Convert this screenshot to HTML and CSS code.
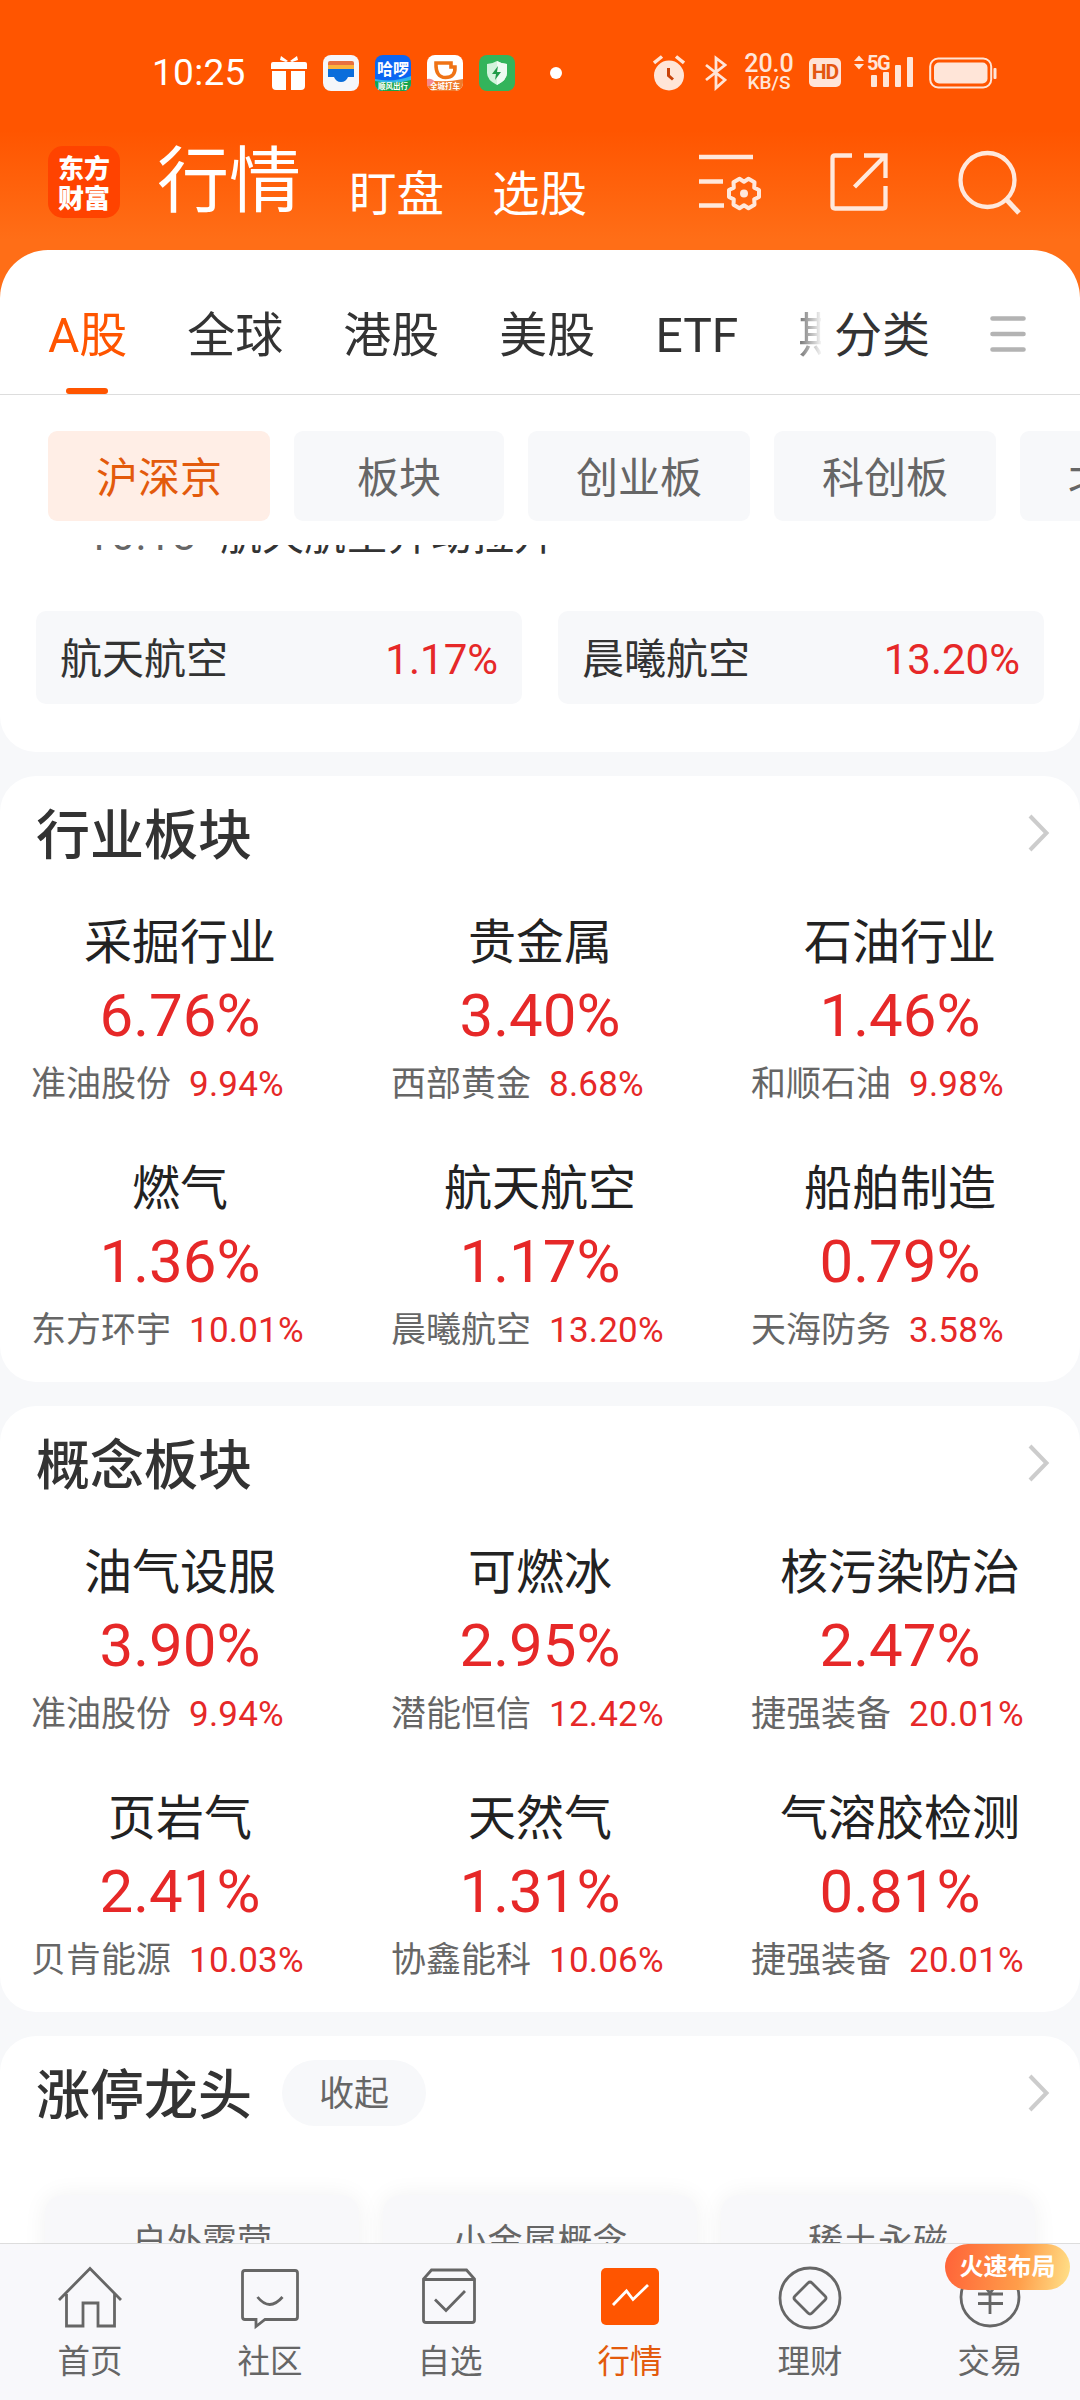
FILE: index.html
```html
<!DOCTYPE html>
<html lang="zh-CN">
<head>
<meta charset="utf-8">
<title>行情</title>
<link rel="stylesheet" href="styles.css">
</head>
<body>
<div class="app">
  <header class="header">
    <div class="status">
      <span class="clock">10:25</span>
      <div class="notices">
        <svg width="36" height="36" viewBox="0 0 36 36"><g fill="#fff"><path d="M17 6 10 1 9 5l6 2zM19 6l7-5 1 4-6 2z"/><path d="M2 7h32q2 0 2 2v5H0V9q0-2 2-2zM1 16h14v19H5q-4 0-4-4zM20 16h14v15q0 4-4 4H20z"/></g></svg>
        <svg width="36" height="36" viewBox="0 0 36 36"><rect width="36" height="36" rx="8" fill="#f5f6fa"/><path d="M5 8q0-2 2-2h22q2 0 2 2v2H5z" fill="#e8703e"/><path d="M5 10h26v5H5z" fill="#fbb33c"/><path d="M5 14h26v8h-6q-2 5-7 5t-7-5H5z" fill="#0a6ddb"/></svg>
        <svg width="36" height="36" viewBox="0 0 36 36"><clipPath id="hello"><rect width="36" height="36" rx="8"/></clipPath><g clip-path="url(#hello)"><rect width="36" height="36" fill="#0b66f2"/><path d="M0 24q18 4 36-3v15H0z" fill="#31b7e8"/><path d="M0 26q18 4 36-1v11H0z" fill="#17a34a"/></g><text x="18" y="20" class="app-name">哈啰</text><text x="18" y="34" class="app-note">顺风出行</text></svg>
        <svg width="36" height="36" viewBox="0 0 36 36"><clipPath id="ride"><rect width="36" height="36" rx="8"/></clipPath><g clip-path="url(#ride)"><rect width="36" height="36" fill="#fff"/><path d="M0 25q18 3 36-1v12H0z" fill="#ef7b2d"/><path d="M0 24q6-1 8 4l-8 4z" fill="#f58a8f"/></g><path d="M9 8h15v4h4q.5 10.500-9.500 10.500T9 8z" fill="none" stroke="#ef7315" stroke-width="3.600"/><text x="18" y="34" class="app-note">全城打车</text></svg>
        <svg width="36" height="36" viewBox="0 0 36 36"><rect width="36" height="36" rx="8" fill="#33b45b"/><path d="M18 6q5 3 10 3v9q0 7-10 12Q8 25 8 18V9q5 0 10-3z" fill="#d3f3dc"/><path d="M18 6q5 3 10 3v9q0 7-10 12z" fill="#effbf2"/><path d="m19 11-6 8h4l-1 6 6-8h-4z" fill="#1f9b48"/></svg>
      </div>
      <i class="dot"></i>
      <div class="signals">
        <svg width="32" height="36" viewBox="0 0 32 36"><circle cx="16" cy="20.500" r="15" fill="#ffe5d8"/><path d="m1 8 8-6.500M31 8l-8-6.500" stroke="#ffe5d8" stroke-width="3.500"/><path d="M15.500 13v7.500l4.500 4" fill="none" stroke="#c8420a" stroke-width="3"/></svg>
        <svg width="22" height="36" viewBox="0 0 22 36"><path d="m1 10 19 15-9 8V3l9 7L1 25" fill="none" stroke="#ffe5d8" stroke-width="2.800"/></svg>
        <span class="speed"><b>20.0</b><small>KB/S</small></span>
        <span class="hd">HD</span>
        <svg class="cell" width="60" height="36" viewBox="0 0 60 36"><g fill="#ffe5d8"><path d="m0 6 5-5.500L10 6zM0 9l5 5.500L10 9z"/><rect x="17" y="20" width="6" height="12" rx="1"/><rect x="29" y="17" width="6" height="15" rx="1"/><rect x="41" y="10" width="6" height="22" rx="1"/><rect x="53" y="2" width="6" height="30" rx="1"/></g><text x="13" y="14.500" class="cell-name">5G</text></svg>
        <svg width="68" height="32" viewBox="0 0 68 32"><rect x="1.200" y="1.500" width="61" height="29" rx="8" fill="none" stroke="#ffe5d8" stroke-width="2"/><rect x="5" y="5.500" width="53.500" height="21" rx="5" fill="#ffe5d8"/><rect x="64.500" y="11" width="3" height="11" rx="1" fill="#ffe5d8"/></svg>
      </div>
    </div>
    <div class="topbar">
      <div class="logo"><span>东方</span><span>财富</span></div>
      <nav class="modes"><h1>行情</h1><span>盯盘</span><span>选股</span></nav>
      <div class="tools">
        <svg width="64" height="60" viewBox="0 0 64 60"><g fill="none" stroke="#ffe8dc" stroke-width="4.500"><path d="M0 5h54M0 29.500h24M0 53.500h25"/><path transform="translate(45 41.500)" stroke-linejoin="round" stroke-width="4" d="M15-3.500V3.500L10.200 5.900 10.500 11.200 4.500 14.700 0 11.800-4.500 14.700-10.500 11.200-10.200 5.900-15 3.500V-3.500L-10.200-5.900-10.500-11.200-4.500-14.700 0-11.800 4.500-14.700 10.500-11.200 10.200-5.900z"/></g><circle cx="45" cy="41.500" r="4" fill="#ffe8dc"/></svg>
        <svg width="58" height="60" viewBox="0 0 58 60"><path d="M22 3.500H5q-2.500 0-2.500 2.500v48q0 2.500 2.500 2.500h48q2.500 0 2.500-2.500V34M34 3.500h21.500V26M24.500 35 54 5" fill="none" stroke="#ffe8dc" stroke-width="4.300"/></svg>
        <svg width="64" height="66" viewBox="0 0 64 66"><circle cx="29.500" cy="31" r="27" fill="none" stroke="#ffe8dc" stroke-width="4.300"/><path d="m48 50 13 14" stroke="#ffe8dc" stroke-width="5"/></svg>
      </div>
    </div>
  </header>

  <section class="sheet">
    <div class="tabs">
      <div class="tab-strip"><span class="active">A股</span><span>全球</span><span>港股</span><span>美股</span><span>ETF</span><span>期货</span></div>
      <span class="sort">分类</span>
      <svg width="36" height="38" viewBox="0 0 36 38"><path d="M2.500 3.500h31M2.500 19h31M2.500 34.500h31" stroke="#b3b3b3" stroke-width="4.600" stroke-linecap="round"/></svg>
    </div>
    <div class="chips"><span class="wide on">沪深京</span><span>板块</span><span class="wide">创业板</span><span class="wide">科创板</span><span class="wide">北交所</span></div>
  </section>

  <main class="feed">
    <section class="card news">
      <div class="headline"><time>10:18</time><span>航天航空异动拉升</span></div>
      <div class="related">
        <div><span>航天航空</span><em>1.17%</em></div>
        <div><span>晨曦航空</span><em>13.20%</em></div>
      </div>
    </section>

    <section class="card">
      <div class="card-head"><h2>行业板块</h2><svg class="more" width="22" height="38" viewBox="0 0 22 38"><path d="m2 2 16.500 17L2 36" fill="none" stroke="#ccc" stroke-width="4"/></svg></div>
      <div class="grid">
        <article><h3>采掘行业</h3><strong>6.76%</strong><p>准油股份<em>9.94%</em></p></article>
        <article><h3>贵金属</h3><strong>3.40%</strong><p>西部黄金<em>8.68%</em></p></article>
        <article><h3>石油行业</h3><strong>1.46%</strong><p>和顺石油<em>9.98%</em></p></article>
        <article><h3>燃气</h3><strong>1.36%</strong><p>东方环宇<em>10.01%</em></p></article>
        <article><h3>航天航空</h3><strong>1.17%</strong><p>晨曦航空<em>13.20%</em></p></article>
        <article><h3>船舶制造</h3><strong>0.79%</strong><p>天海防务<em>3.58%</em></p></article>
      </div>
    </section>

    <section class="card">
      <div class="card-head"><h2>概念板块</h2><svg class="more" width="22" height="38" viewBox="0 0 22 38"><path d="m2 2 16.500 17L2 36" fill="none" stroke="#ccc" stroke-width="4"/></svg></div>
      <div class="grid">
        <article><h3>油气设服</h3><strong>3.90%</strong><p>准油股份<em>9.94%</em></p></article>
        <article><h3>可燃冰</h3><strong>2.95%</strong><p>潜能恒信<em>12.42%</em></p></article>
        <article><h3>核污染防治</h3><strong>2.47%</strong><p>捷强装备<em>20.01%</em></p></article>
        <article><h3>页岩气</h3><strong>2.41%</strong><p>贝肯能源<em>10.03%</em></p></article>
        <article><h3>天然气</h3><strong>1.31%</strong><p>协鑫能科<em>10.06%</em></p></article>
        <article><h3>气溶胶检测</h3><strong>0.81%</strong><p>捷强装备<em>20.01%</em></p></article>
      </div>
    </section>

    <section class="card leaders">
      <div class="card-head"><h2>涨停龙头</h2><span class="fold">收起</span><svg class="more" width="22" height="38" viewBox="0 0 22 38"><path d="m2 2 16.500 17L2 36" fill="none" stroke="#ccc" stroke-width="4"/></svg></div>
      <div class="themes"><span>户外露营</span><span>小金属概念</span><span>稀土永磁</span></div>
    </section>
  </main>

  <nav class="bottom">
    <a><svg width="66" height="66" viewBox="0 0 66 66"><path d="m2 35 31-31.500L64 35M9.500 29v32H26V38h15v23h16.500V29" fill="none" stroke="#666" stroke-width="2.800"/></svg>首页</a>
    <a><svg width="66" height="66" viewBox="0 0 66 66"><path d="M8 5.500h50q2.500 0 2.500 2.500v44q0 2.500-2.500 2.500H28l-9 7v-7H8q-2.500 0-2.500-2.500V8q0-2.500 2.500-2.500zM20.500 32q12 15 25 0" fill="none" stroke="#666" stroke-width="2.800"/></svg>社区</a>
    <a><svg width="66" height="66" viewBox="0 0 66 66"><path d="M6.500 14v41q0 2.500 2.500 2.500h46q2.500 0 2.500-2.500V14l-8-9h-35zM6.500 14.500h51M18 34.500l11 11L48 26" fill="none" stroke="#666" stroke-width="2.800"/></svg>自选</a>
    <a class="current"><svg width="66" height="66" viewBox="0 0 66 66"><rect x="4" y="3" width="58" height="57" rx="5" fill="#f50"/><path d="m16 40 13.500-14 6.500 8.500L51 20" fill="none" stroke="#fff" stroke-width="2.800"/></svg>行情</a>
    <a><svg width="66" height="66" viewBox="0 0 66 66"><circle cx="33" cy="33" r="30" fill="none" stroke="#666" stroke-width="2.800"/><path d="M31 18q2-2 4 0l13 13q2 2 0 4L35 48q-2 2-4 0L18 35q-2-2 0-4z" fill="none" stroke="#666" stroke-width="2.800"/></svg>理财</a>
    <a><svg width="66" height="66" viewBox="0 0 66 66"><g fill="none" stroke="#666" stroke-width="2.800"><circle cx="33" cy="32" r="29"/><path d="m22 14 11 14 11-14M21 29h25M21 38.500h25M33 27v22"/></g></svg>交易<span class="promo">火速布局</span></a>
  </nav>
</div>
</body>
</html>
```
FILE: styles.css
```css
* { box-sizing: border-box; margin: 0; padding: 0; }
body { width: 1080px; height: 2400px; overflow: hidden; background: #f7f8fa; color: #333; font-family: Roboto, "Noto Sans CJK SC", sans-serif; }
svg { display: block; flex: none; }
h1, h2, h3, em { font-weight: 400; font-style: normal; }
.app { height: 2400px; display: flex; flex-direction: column; overflow: hidden; }

.header { height: 298px; margin-bottom: -48px; flex: none; background: linear-gradient(#f50 130px, #ff6e17 240px); color: #fff; }
.status { height: 128px; padding: 17px 83px 0 152px; display: flex; align-items: center; }
.clock { width: 119px; font-size: 37px; letter-spacing: .3px; }
.notices { display: flex; gap: 16px; }
.dot { width: 12px; height: 12px; margin-left: 35px; border-radius: 50%; background: #fff; }
.signals { margin-left: auto; display: flex; align-items: center; color: #ffe5d8; }
.signals > :nth-child(2) { margin-left: 20px; }
.speed { width: 52px; margin-left: 16px; display: flex; flex-direction: column; align-items: center; font-weight: 500; }
.speed b { font-size: 25px; line-height: 21px; font-weight: 500; }
.speed small { font-size: 19px; line-height: 18px; }
.hd { width: 32px; height: 29px; margin-left: 14px; border-radius: 5px; background: #ffe5d8; color: #e3560f; font-size: 21px; line-height: 29px; text-align: center; font-weight: 700; letter-spacing: -1px; }
.cell { margin-left: 13px; margin-right: 15px; }
.cell-name { font-size: 20px; font-weight: 700; fill: #ffe5d8; letter-spacing: -1.500px; }
.app-name { font-size: 16px; font-weight: 700; fill: #fff; text-anchor: middle; }
.app-note { font-size: 7.500px; font-weight: 700; fill: #fff; text-anchor: middle; }

.topbar { height: 108px; padding: 0 58px 0 48px; display: flex; align-items: center; }
.logo { width: 72px; height: 72px; border-radius: 15px; background: #ff4300; display: flex; flex-direction: column; align-items: center; justify-content: center; font: 900 26px/30px "Noto Sans CJK SC", sans-serif; }
.modes { margin-left: 37px; display: flex; align-items: center; line-height: 108px; }
.modes h1 { font-size: 72px; }
.modes span { margin-left: 48px; padding-top: 25px; font-size: 47.500px; }
.tools { margin-left: auto; display: flex; align-items: center; gap: 70px; }
.tools svg:first-child { margin-right: -3px; }

.sheet { height: 295px; flex: none; background: #fff; border-radius: 48px 48px 0 0; }
.tabs { height: 145px; padding: 0 54px 0 48px; border-bottom: 1px solid #ddd; display: flex; align-items: flex-start; color: #333; font-size: 48px; line-height: 172px; }
.tabs > svg { margin-left: auto; margin-top: 65px; }
.tab-strip { width: 773px; height: 144px; display: flex; gap: 60px; overflow: hidden; white-space: nowrap; -webkit-mask-image: linear-gradient(90deg, #000 740px, transparent 775px); mask-image: linear-gradient(90deg, #000 740px, transparent 775px); }
.tab-strip .active { height: 144px; color: #f50; position: relative; }
.tab-strip .active::after { content: ""; position: absolute; left: 18px; bottom: 0; width: 42px; height: 6px; border-radius: 3px; background: #f50; }
.sort { margin-left: 13px; height: 144px; }
.chips { padding: 36px 0 0 48px; display: flex; gap: 24px; overflow: hidden; }
.chips span { width: 210px; height: 90px; flex: none; border-radius: 9px; background: #f7f8fa; color: #666; font-size: 42px; line-height: 95px; text-align: center; }
.chips .wide { width: 222px; }
.chips .on { background: #ffeee6; color: #e35a0c; }

.feed { height: 1698px; flex: none; overflow: hidden; display: flex; flex-direction: column; gap: 24px; }
.card { flex: none; height: 606px; border-radius: 36px; background: #fff; }
.news { height: 207px; padding: 0 36px; border-radius: 0 0 36px 36px; overflow: hidden; }
.headline { height: 66px; padding-left: 50px; display: flex; font-size: 42px; line-height: 60px; }
.headline time { width: 134px; color: #666; letter-spacing: 1.300px; }
.headline > * { margin-top: -39px; }
.related { display: grid; grid-template-columns: 1fr 1fr; gap: 36px; }
.related div { height: 93px; padding: 0 24px; border-radius: 10px; background: #f7f8fa; display: flex; align-items: flex-start; justify-content: space-between; font-size: 42px; line-height: 97px; }
em, strong { color: #e62828; }
.card-head { height: 120px; padding: 0 30px 6px 36px; display: flex; align-items: center; }
.card-head h2 { font-size: 54px; line-height: 80px; margin-top: 7px; font-weight: 500; }
.more { margin-left: auto; }
.grid { display: grid; grid-template-columns: repeat(3, 1fr); grid-auto-rows: 246px; }
article { display: flex; flex-direction: column; align-items: center; padding-top: 12px; }
article h3 { font-size: 48px; line-height: 70px; color: #222; }
article strong { font-size: 60px; line-height: 75px; font-weight: 400; }
article p { align-self: stretch; padding-left: 31px; font-size: 35px; line-height: 64px; color: #666; }
article p em { margin-left: 18px; letter-spacing: .2px; }
.fold { width: 144px; height: 66px; margin-left: 30px; border-radius: 33px; background: #f7f8fa; color: #666; font-size: 35px; line-height: 69px; text-align: center; }
.themes { padding: 39px 45px 0; display: grid; grid-template-columns: repeat(3, 1fr); gap: 24px; }
.themes span { height: 200px; border-radius: 18px; background: #f8f8fa; box-shadow: 0 0 24px rgba(0, 0, 0, .06); color: #666; font-size: 35px; line-height: 95px; text-align: center; }

.bottom { height: 157px; flex: none; border-top: 1px solid #ddd; background: #f8f8fb; display: grid; grid-template-columns: repeat(6, 1fr); }
.bottom a { position: relative; padding-top: 21px; display: flex; flex-direction: column; align-items: center; font-size: 32.500px; line-height: 62px; color: #666; }
.bottom .current { color: #e35a0c; }
.promo { position: absolute; left: 45px; top: 0; width: 125px; height: 46px; border-radius: 23px; background: linear-gradient(100deg, #ff6238, #ff9d4a 60%, #ffe28a); color: #fff; font-size: 24px; font-weight: 700; line-height: 46px; text-align: center; }
```
